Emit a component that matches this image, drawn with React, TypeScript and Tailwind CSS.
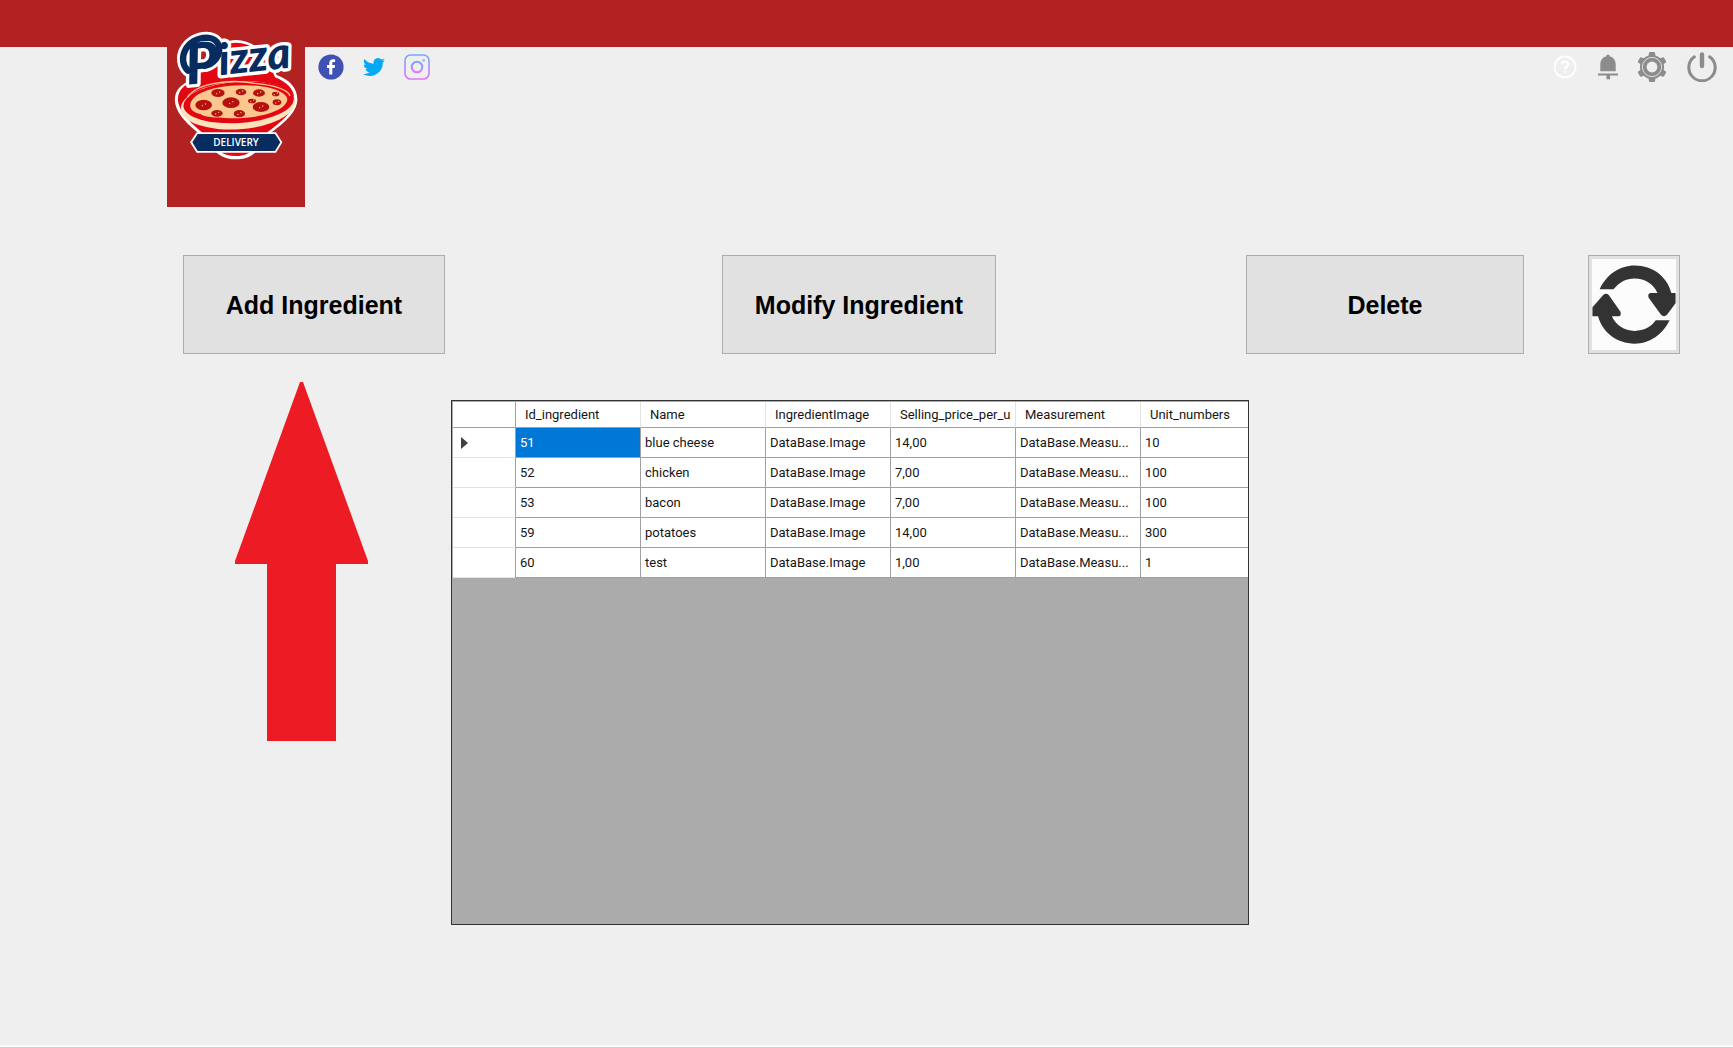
import React from 'react';

type Ingredient = {
  id: number;
  name: string;
  price: string;
  units: number;
};

const INGREDIENTS: Ingredient[] = [
  { id: 51, name: 'blue cheese', price: '14,00', units: 10 },
  { id: 52, name: 'chicken', price: '7,00', units: 100 },
  { id: 53, name: 'bacon', price: '7,00', units: 100 },
  { id: 59, name: 'potatoes', price: '14,00', units: 300 },
  { id: 60, name: 'test', price: '1,00', units: 1 },
];

const COLUMNS = [
  'Id_ingredient',
  'Name',
  'IngredientImage',
  'Selling_price_per_u',
  'Measurement',
  'Unit_numbers',
];

const PEPPERONI = [
  { x: 174, y: 219, rx: 20, ry: 12 },
  { x: 243, y: 216, rx: 16, ry: 10 },
  { x: 297, y: 219, rx: 18, ry: 11 },
  { x: 347, y: 222, rx: 11, ry: 7 },
  { x: 131, y: 255, rx: 25, ry: 16 },
  { x: 213, y: 248, rx: 26, ry: 16 },
  { x: 276, y: 243, rx: 12, ry: 7 },
  { x: 303, y: 261, rx: 25, ry: 15 },
  { x: 351, y: 247, rx: 13, ry: 9 },
  { x: 171, y: 280, rx: 17, ry: 10 },
  { x: 238, y: 281, rx: 17, ry: 11 },
];

const SWASH = 'M84 152C50 120 76 54 140 53C196 54 186 128 134 138';

function PizzaLogo() {
  return (
    <svg
      viewBox="36 36 384 390"
      className="h-[130px] w-[128px] overflow-visible"
      role="img"
      aria-label="Pizza Delivery"
    >
      <path
        d="M228 60C175 60 130 110 100 180C60 190 42 215 45 245C50 290 100 325 128 350C160 400 190 418 228 418C268 418 295 400 325 345C370 310 410 280 412 240C413 205 390 180 350 165C325 100 280 60 228 60Z"
        fill="#fff"
      />
      <path
        d="M228 68C180 68 138 110 106 184C70 192 52 215 54 243C60 285 105 318 134 344C165 390 190 408 228 408C265 408 290 388 318 340C365 305 402 275 403 240C404 208 380 186 345 172C320 108 280 68 228 68Z"
        fill="#e30613"
      />
      <ellipse cx="234" cy="256" rx="172" ry="72" transform="rotate(-4 234 256)" fill="#fde3bb" />
      <ellipse cx="236" cy="247" rx="166" ry="62" transform="rotate(-4 236 247)" fill="#e30613" />
      <path d="M82 232C110 190 205 176 285 190C335 194 385 208 390 228" fill="none" stroke="#fbc78e" strokeWidth="4" />
      <path
        d="M92 248C105 217 165 198 238 196C320 193 380 214 382 238C380 266 330 283 286 290C215 299 130 294 122 282C108 280 84 270 92 248Z"
        fill="#fbc78e"
      />
      {PEPPERONI.map((p) => (
        <g key={`${p.x}-${p.y}`}>
          <ellipse cx={p.x} cy={p.y} rx={p.rx} ry={p.ry} fill="#b5120f" />
          <circle cx={p.x - 4} cy={p.y + 2} r="2" fill="#fbc78e" />
          <circle cx={p.x + 5} cy={p.y - 3} r="2" fill="#fbc78e" />
        </g>
      ))}
      <path d="M110 337H348L367 367L348 398H110L90 367Z" fill="#fff" />
      <path d="M113 342H345L361 367L345 393H113L97 367Z" fill="#062c60" />
      <text
        x="228"
        y="377"
        textAnchor="middle"
        fontFamily="'Open Sans', sans-serif"
        fontSize="30"
        fontWeight="600"
        fill="#fff"
      >
        DELIVERY
      </text>
      <g strokeLinejoin="round" strokeLinecap="round">
        <path d={SWASH} fill="none" stroke="#fff" strokeWidth="36" />
        <text
          x="82"
          y="194"
          transform="rotate(-6 82 194)"
          fontFamily="Lato, sans-serif"
          fontStyle="italic"
          fontWeight="900"
          fontSize="170"
          fill="#062c60"
          stroke="#fff"
          strokeWidth="20"
          paintOrder="stroke"
        >
          P
          <tspan fontSize="132" y="176">
            izza
          </tspan>
        </text>
        <path d={SWASH} fill="none" stroke="#062c60" strokeWidth="19" />
      </g>
    </svg>
  );
}

function FacebookIcon() {
  return (
    <svg viewBox="0 0 26 26" className="size-[26px]" aria-hidden="true">
      <circle cx="13" cy="13" r="12.6" fill="#3f51b5" />
      <path
        d="M14.3 20.6V14h2.4l.4-3h-2.8V9.4c0-.9.3-1.3 1.3-1.3h1.5V5.4c-.4-.1-1.1-.2-2-.2-2.3 0-3.8 1.3-3.8 3.8v2H9v3h2.3v6.6Z"
        fill="#fff"
      />
    </svg>
  );
}

function TwitterIcon() {
  return (
    <svg viewBox="0 0 24 24" className="size-[22px]" aria-hidden="true">
      <path
        d="M23.9 4.6a10 10 0 0 1-2.8.8 4.9 4.9 0 0 0 2.1-2.7 9.8 9.8 0 0 1-3.1 1.2 4.9 4.9 0 0 0-8.4 4.5A14 14 0 0 1 1.7 3.2a4.9 4.9 0 0 0 1.5 6.5 4.9 4.9 0 0 1-2.2-.6v.1a4.9 4.9 0 0 0 3.9 4.8 4.9 4.9 0 0 1-2.2.1 4.9 4.9 0 0 0 4.6 3.4A9.9 9.9 0 0 1 0 19.5 14 14 0 0 0 21.5 7.1a10 10 0 0 0 2.4-2.5Z"
        fill="#03a9f4"
      />
    </svg>
  );
}

function InstagramIcon() {
  return (
    <svg viewBox="0 0 26 26" className="size-[26px]" aria-hidden="true">
      <defs>
        <linearGradient id="insta" x1="0" y1="0" x2="0" y2="1">
          <stop offset="0" stopColor="#70a8ff" />
          <stop offset="1" stopColor="#dc78f8" />
        </linearGradient>
      </defs>
      <g fill="none" stroke="url(#insta)">
        <rect x="1" y="1" width="24" height="24" rx="5.5" strokeWidth="1.6" />
        <circle cx="13" cy="13" r="5.3" strokeWidth="2" />
      </g>
      <circle cx="19.7" cy="6.4" r="1.4" fill="#a0b8fb" />
    </svg>
  );
}

function HelpIcon() {
  return (
    <svg viewBox="0 0 24 24" className="size-6" fill="none" stroke="#fff" aria-hidden="true">
      <circle cx="12" cy="12" r="10.5" strokeWidth="1.8" />
      <path d="M8.7 9.6c0-1.9 1.5-3 3.3-3s3.3 1.1 3.3 2.9c0 2.4-3.2 2.2-3.2 4.7" strokeWidth="2.2" />
      <path d="M12.1 15.8v2" strokeWidth="2.2" />
    </svg>
  );
}

function BellIcon() {
  return (
    <svg viewBox="0 0 22 26" className="h-[26px] w-[22px]" fill="#8c8c8c" aria-hidden="true">
      <path d="M9.5 2.2V.7h3v1.5c3.8.7 6.2 4 6.2 8v7H3.3v-7c0-4 2.4-7.3 6.2-8Z" />
      <path d="M1 19.500h20v2H13v3.700H9.500v-3.700H1Z" />
    </svg>
  );
}

function GearIcon() {
  const teeth = [0, 60, 120, 180, 240, 300];
  return (
    <svg viewBox="-15 -15 30 30" className="size-[30px]" aria-hidden="true">
      {teeth.map((angle) => (
        <path
          key={angle}
          d="M-3.6 -10L-3 -14.2Q-2.9 -15 -2 -15H2Q2.9 -15 3 -14.2L3.6 -10Z"
          transform={`rotate(${angle})`}
          fill="#8c8c8c"
        />
      ))}
      <circle r="12" fill="#8c8c8c" />
      <circle r="9.6" fill="none" stroke="#e8e8e8" strokeWidth="0.9" />
      <circle r="5.4" fill="#efefef" />
    </svg>
  );
}

function PowerIcon() {
  return (
    <svg
      viewBox="0 0 30 30"
      className="size-[30px]"
      fill="none"
      stroke="#8c8c8c"
      strokeLinecap="round"
      aria-hidden="true"
    >
      <path d="M7.4 4.8A13.2 13.2 0 1 0 22.6 4.8" strokeWidth="3" />
      <path d="M15 2.5V14" strokeWidth="4.4" />
    </svg>
  );
}

function RefreshIcon() {
  return (
    <svg viewBox="0 0 252 276" className="h-full w-full" fill="#333" aria-hidden="true">
      <path d="M22 92C42 48 82 20 128 20C184 20 228 56 239 103H252V134L226 169Q217 178 208 169L170 117Q167 104 176 103H197C186 76 160 59 128 59C102 59 80 71 64 92Z" />
      <path d="M0 174V146L32 110Q41 101 50 110L85 160Q88 173 80 174H59C71 201 96 218 128 218C156 218 178 206 192 186H234C214 228 174 257 128 257C74 257 30 223 17 174Z" />
    </svg>
  );
}

function PointerArrow() {
  return (
    <svg viewBox="0 0 133 359" className="h-[359px] w-[133px]" fill="#ed1c24" aria-hidden="true">
      <path d="M65 0H68L133 179V182H101V359H32V182H0V179Z" />
    </svg>
  );
}

const ACTION_BUTTON =
  'h-[99px] border border-[#adadad] bg-[#e1e1e1] text-[25px] leading-8 font-bold text-black';

function IngredientGrid() {
  return (
    <div className="h-[525px] overflow-hidden border border-[#333] bg-[#ababab] pt-px pl-px">
      <table className="w-full table-fixed border-separate border-spacing-0 bg-white text-left font-[Roboto,sans-serif] text-[13px] text-[#151515]">
        <colgroup>
          <col className="w-[63px]" />
          <col className="w-[125px]" />
          <col className="w-[125px]" />
          <col className="w-[125px]" />
          <col className="w-[125px]" />
          <col className="w-[125px]" />
          <col />
        </colgroup>
        <thead>
          <tr className="h-[26px]">
            <th scope="col" aria-label="Current row" className="border-r border-b border-[#a0a0a0]" />
            {COLUMNS.map((title) => (
              <th
                key={title}
                scope="col"
                className="border-r border-r-[#e3e3e3] border-b border-b-[#a0a0a0] pl-[9px] font-normal whitespace-nowrap last:border-r-0"
              >
                {title}
              </th>
            ))}
          </tr>
        </thead>
        <tbody>
          {INGREDIENTS.map((item, index) => (
            <tr
              key={item.id}
              className="h-[30px] [&>td]:border-r [&>td]:border-b [&>td]:border-[#a0a0a0] [&>td]:pl-1 [&>td]:whitespace-nowrap [&>td:last-child]:border-r-0"
            >
              <th scope="row" className="border-r border-b border-r-[#a0a0a0] border-b-[#e3e3e3] pl-2">
                {index === 0 && (
                  <svg viewBox="0 0 7 12" className="h-3 w-[7px]" fill="#404040" aria-label="Selected row">
                    <path d="M0 0L7 6L0 12Z" />
                  </svg>
                )}
              </th>
              <td className={index === 0 ? 'bg-[#0078d7] text-white' : ''}>{item.id}</td>
              <td>{item.name}</td>
              <td>DataBase.Image</td>
              <td>{item.price}</td>
              <td>DataBase.Measu...</td>
              <td>{item.units}</td>
            </tr>
          ))}
        </tbody>
      </table>
    </div>
  );
}

export default function App() {
  return (
    <div className="flex min-h-screen flex-col bg-[#efefef] font-['Liberation_Sans',Arial,sans-serif]">
      <div className="h-[47px] bg-[#b22222]" />
      <header className="flex items-start pr-4 pl-[167px]">
        <div className="flex h-40 w-[138px] justify-center bg-[#b22222]">
          <div className="-mt-[15px]">
            <PizzaLogo />
          </div>
        </div>
        <nav aria-label="Social" className="flex h-10 items-center gap-[19px] pl-[13px]">
          <a href="#facebook" aria-label="Facebook">
            <FacebookIcon />
          </a>
          <a href="#twitter" aria-label="Twitter">
            <TwitterIcon />
          </a>
          <a href="#instagram" aria-label="Instagram">
            <InstagramIcon />
          </a>
        </nav>
        <div className="ml-auto flex h-10 items-center gap-[18px]">
          <button type="button" aria-label="Help" className="px-0.5">
            <HelpIcon />
          </button>
          <button type="button" aria-label="Notifications">
            <BellIcon />
          </button>
          <button type="button" aria-label="Settings" className="pr-0.5">
            <GearIcon />
          </button>
          <button type="button" aria-label="Log out">
            <PowerIcon />
          </button>
        </div>
      </header>
      <div className="mt-12 grid grid-cols-[183fr_262fr_277fr_274fr_250fr_278fr_64fr_92fr_53fr]">
        <button type="button" className={`col-start-2 ${ACTION_BUTTON}`}>
          Add Ingredient
        </button>
        <button type="button" className={`col-start-4 ${ACTION_BUTTON}`}>
          Modify Ingredient
        </button>
        <button type="button" className={`col-start-6 ${ACTION_BUTTON}`}>
          Delete
        </button>
        <button
          type="button"
          aria-label="Refresh"
          className="col-start-8 h-[99px] border border-[#adadad] bg-[#e1e1e1] p-[3px]"
        >
          <span className="block h-full bg-[#fcfcfc]">
            <RefreshIcon />
          </span>
        </button>
      </div>
      <main className="grid grid-cols-[451fr_798fr_484fr] pt-7">
        <div className="flex items-start justify-center pl-[152px]">
          <PointerArrow />
        </div>
        <div className="pt-[18px]">
          <IngredientGrid />
        </div>
      </main>
      <footer className="mt-auto h-[3px] border-t-2 border-b border-t-[#fafafa] border-b-[#cfcfcf]" />
    </div>
  );
}
